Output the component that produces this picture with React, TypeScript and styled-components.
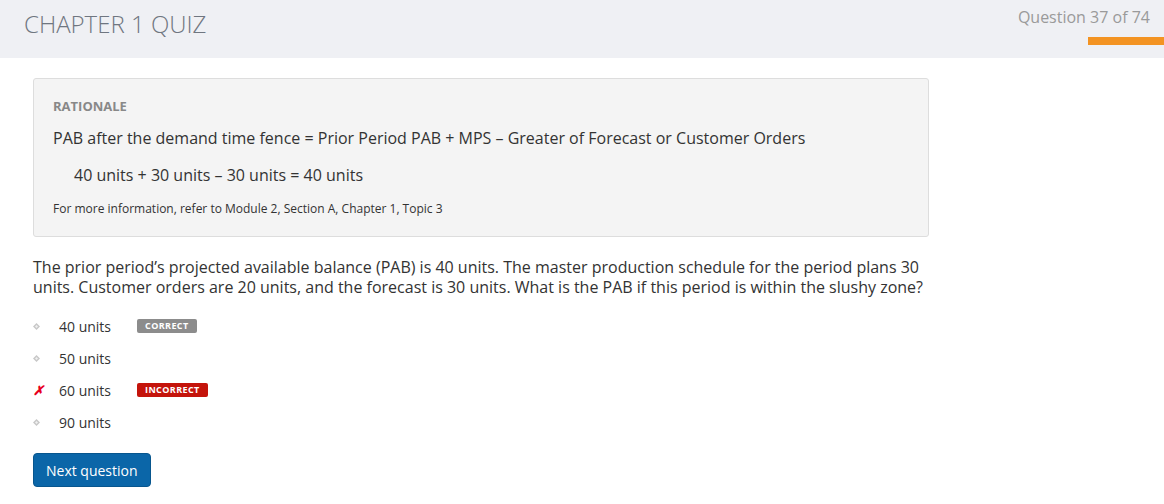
import React from "react";
import styled, { createGlobalStyle } from "styled-components";

const GlobalStyle = createGlobalStyle`
  body {
    margin: 0;
    background: #ffffff;
    font-family: "Open Sans", "Liberation Sans", sans-serif;
    color: #333333;
  }
`;

const options = [
    { label: "40 units", mark: "dot", badge: "correct" },
    { label: "50 units", mark: "dot", badge: "" },
    { label: "60 units", mark: "cross", badge: "incorrect" },
    { label: "90 units", mark: "dot", badge: "" },
];

const App = () => {
    return (
        <Page>
            <GlobalStyle />
            <Header>
                <Title>CHAPTER 1 QUIZ</Title>
                <Progress>
                    <Counter>Question 37 of 74</Counter>
                    <ProgressBar />
                </Progress>
            </Header>
            <Content>
                <Rationale>
                    <RationaleLabel>RATIONALE</RationaleLabel>
                    <Formula>
                        PAB after the demand time fence = Prior Period PAB + MPS – Greater of Forecast or Customer Orders
                    </Formula>
                    <Worked>40 units + 30 units – 30 units = 40 units</Worked>
                    <Reference>For more information, refer to Module 2, Section A, Chapter 1, Topic 3</Reference>
                </Rationale>
                <Question>
                    The prior period’s projected available balance (PAB) is 40 units. The master production schedule for the period plans 30
                    units. Customer orders are 20 units, and the forecast is 30 units. What is the PAB if this period is within the slushy zone?
                </Question>
                <OptionList>
                    {options.map((o) => (
                        <Option key={o.label}>
                            <Mark>
                                {o.mark === "cross" ? (
                                    <Cross>✗</Cross>
                                ) : (
                                    <svg width="7" height="7" viewBox="0 0 7 7">
                                        <path d="M3.5 0 L7 3.5 L3.5 7 L0 3.5 Z" fill="#c8c8c8" />
                                        <path d="M3.5 2 L5 3.5 L3.5 5 L2 3.5 Z" fill="#f0f0f0" />
                                    </svg>
                                )}
                            </Mark>
                            <OptionText>{o.label}</OptionText>
                            {o.badge && <Badge $kind={o.badge}>{o.badge.toUpperCase()}</Badge>}
                        </Option>
                    ))}
                </OptionList>
                <NextButton>Next question</NextButton>
            </Content>
        </Page>
    );
};

const Page = styled.div`
    width: 1164px;
    height: 504px;
    overflow: hidden;
`;

const Header = styled.div`
    height: 58px;
    background-color: #eff0f4;
    display: flex;
    justify-content: space-between;
    align-items: flex-start;
`;

const Title = styled.div`
    margin: 7px 0 0 24px;
    font-size: 24px;
    font-weight: 300;
    color: #6f7680;
`;

const Progress = styled.div`
    display: flex;
    flex-direction: column;
    align-items: flex-end;
`;

const Counter = styled.div`
    margin: 6px 14px 0 0;
    font-size: 16px;
    color: #9a9a9a;
`;

const ProgressBar = styled.div`
    margin-top: 9px;
    width: 76px;
    height: 8px;
    background-color: #f39322;
`;

const Content = styled.div`
    padding: 20px 0 0 33px;
`;

const Rationale = styled.div`
    width: 855px;
    background-color: #f4f4f4;
    border: 1px solid #dddddd;
    border-radius: 3px;
    padding: 19px 20px 19px 19px;
`;

const RationaleLabel = styled.div`
    font-size: 13px;
    font-weight: 700;
    color: #888888;
    line-height: 16px;
`;

const Formula = styled.div`
    margin-top: 13px;
    font-size: 16px;
    line-height: 22px;
    color: #333333;
`;

const Worked = styled.div`
    margin-top: 15px;
    padding-left: 21px;
    font-size: 16px;
    line-height: 22px;
`;

const Reference = styled.div`
    margin-top: 15px;
    font-size: 12px;
    line-height: 16px;
    color: #333333;
`;

const Question = styled.div`
    margin-top: 20px;
    width: 900px;
    font-size: 16px;
    line-height: 20px;
    color: #333333;
`;

const OptionList = styled.div`
    margin-top: 13px;
    display: flex;
    flex-direction: column;
`;

const Option = styled.div`
    height: 32px;
    display: flex;
    align-items: center;
`;

const Mark = styled.div`
    width: 26px;
    display: flex;
    align-items: center;
`;

const Cross = styled.span`
    color: #e8001c;
    font-size: 13px;
    font-weight: 700;
    font-style: italic;
`;

const OptionText = styled.div`
    width: 78px;
    font-size: 14px;
    color: #333333;
`;

const Badge = styled.div<{ $kind: string }>`
    padding: 0 8px;
    height: 14px;
    line-height: 14px;
    font-size: 9px;
    font-weight: 700;
    letter-spacing: 0.4px;
    color: #ffffff;
    border-radius: 2px;
    background-color: ${(p) => (p.$kind === "correct" ? "#8c8c8c" : "#c4140b")};
`;

const NextButton = styled.button`
    margin-top: 15px;
    height: 34px;
    padding: 0 12px;
    background-color: #0b66a8;
    color: #ffffff;
    border: 1px solid #08568e;
    border-radius: 4px;
    font-family: "Open Sans", "Liberation Sans", sans-serif;
    font-size: 14px;
    cursor: pointer;
`;

export default App;
